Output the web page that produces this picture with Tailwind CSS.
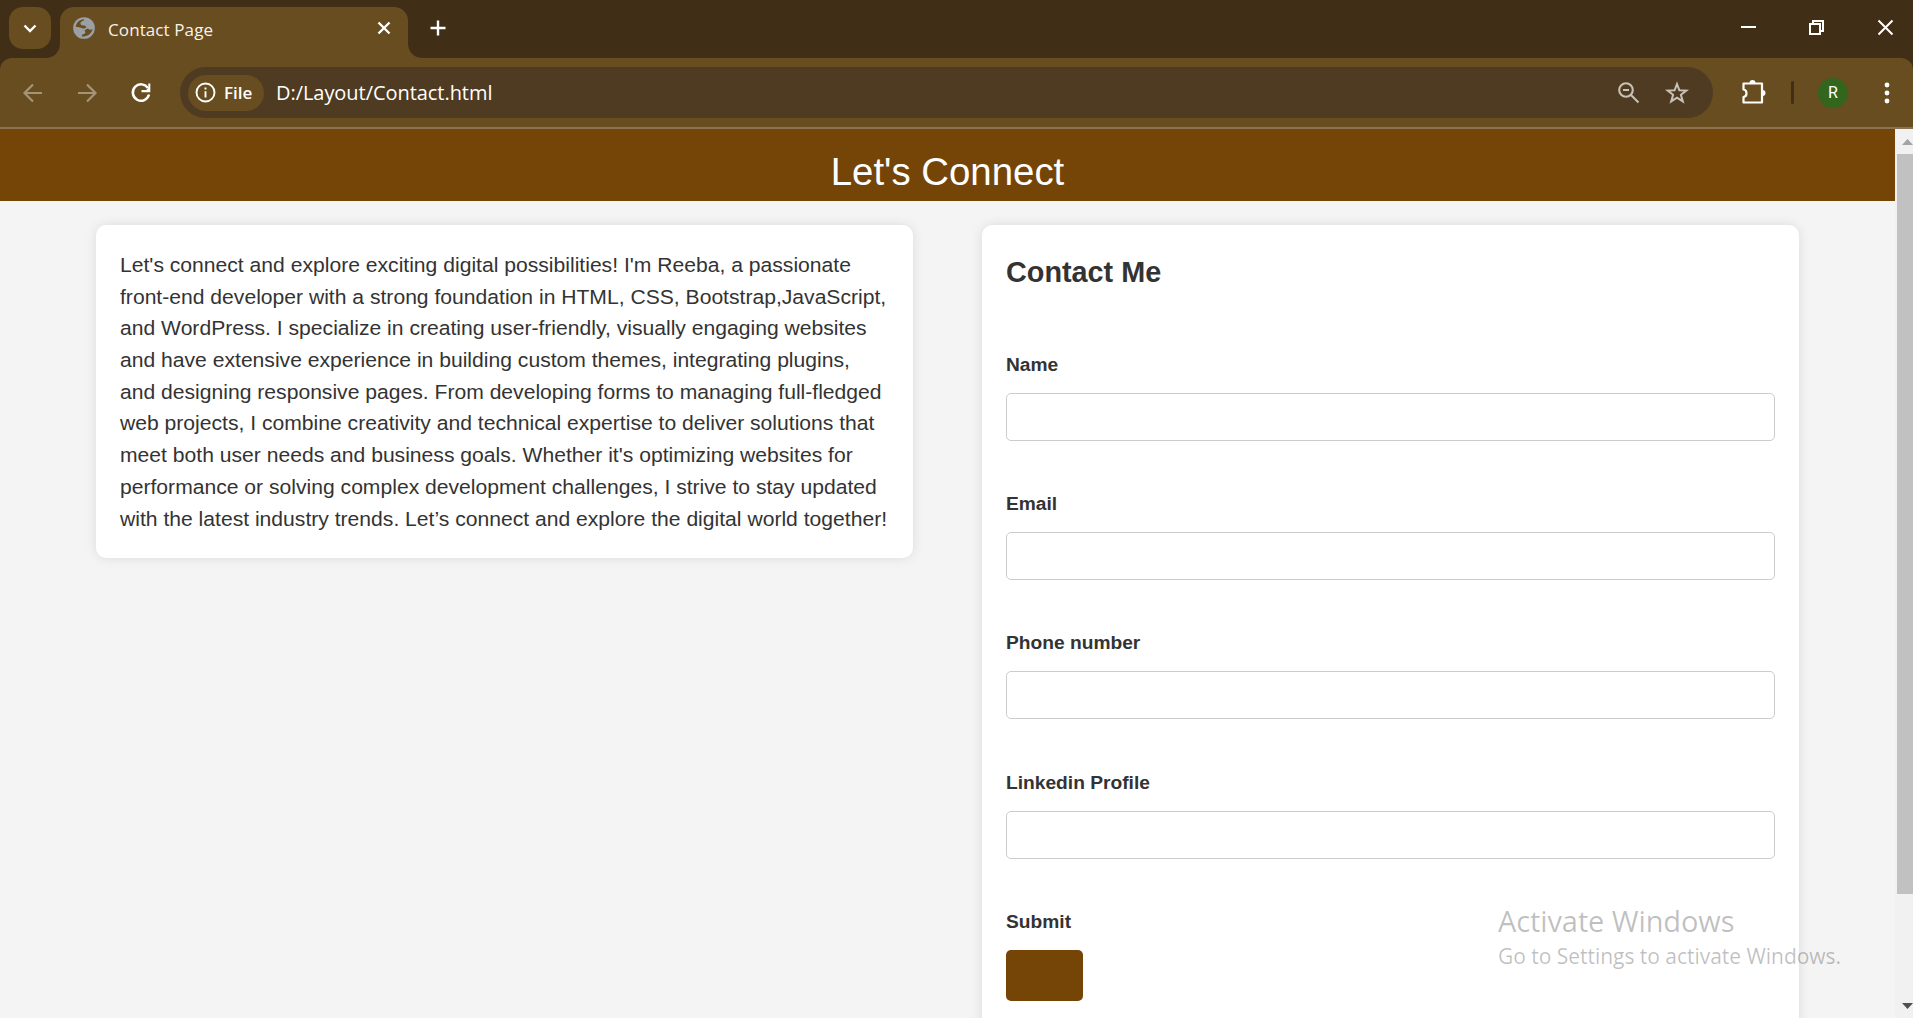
<!DOCTYPE html>
<html lang="en">
<head>
<meta charset="utf-8">
<title>Contact Page</title>
<script src="https://cdn.jsdelivr.net/npm/@tailwindcss/browser@4"></script>
</head>
<body class="w-[1913px] h-[1018px] overflow-hidden bg-[#f3f3f3] font-['Open_Sans','Noto_Sans',sans-serif]">
<div class="relative flex h-[1018px] w-[1913px] flex-col overflow-hidden">
  <!-- Tab strip -->
  <div class="flex h-[58px] shrink-0 bg-[#412e17] pl-[9px]">
    <div class="mt-[7px] flex size-[42px] items-center justify-center rounded-[14px] bg-[#684d20]">
      <svg class="size-[42px]" viewBox="0 0 42 42" fill="none" stroke="#fff" stroke-width="2.4"><path d="M15.500 18.500 21 24l5.500-5.500"/></svg>
    </div>
    <svg class="-ml-[6px] mt-[43px] h-[15px] w-[15px] shrink-0" viewBox="0 0 15 15"><path d="M15 0v15H0C9 15 15 9 15 0z" fill="#684d20"/></svg>
    <div class="mt-[7px] flex h-[51px] w-[348px] shrink-0 rounded-t-[14px] bg-[#684d20]">
      <svg class="ml-[11px] mt-[8px] size-[26px] shrink-0" viewBox="0 0 24 24"><circle cx="12" cy="12" r="10" fill="#9aa0a6"/><path d="M4.300 10.800C5 7 8 4.200 12 4v1C10 5.500 8.500 6.500 8.700 8c.300 1.800 2.300 1.500 3.800 1.800l2 1.200-2.500 1.600C10 12 7 11 4.300 10.800zM20 13c-.700 4-5 7.500-10 6.800l.300-1.800c1.700-.200 3-.800 3-2l-.800-2 3-1.500c1.500 1.300 3.500 1.500 4.500.500z" fill="#684d20"/></svg>
      <span class="ml-[11px] mt-[9px] w-[120px] shrink-0 whitespace-nowrap text-[17px] leading-[27px] tracking-[0.1px] text-[#f8f2e8]">Contact Page</span>
      <svg class="ml-[144px] mt-[9px] size-[24px] shrink-0" viewBox="0 0 24 24" fill="none" stroke="#fff" stroke-width="2.400"><path d="M6.500 6.500l11 11M17.500 6.500l-11 11"/></svg>
    </div>
    <svg class="mt-[43px] size-[15px] shrink-0" viewBox="0 0 15 15"><path d="M0 0v15h15C6 15 0 9 0 0z" fill="#684d20"/></svg>
    <svg class="ml-[3px] mt-[16px] size-[24px]" viewBox="0 0 24 24" fill="none" stroke="#fff" stroke-width="2.400"><path d="M12 4.500v15M4.500 12h15"/></svg>
    <div class="ml-auto flex pr-[19px] pt-[19px]">
      <svg class="h-[17px] w-[17px]" viewBox="0 0 17 17"><path d="M1 7h15v2H1z" fill="#fff"/></svg>
      <svg class="ml-[51px] size-[17px]" viewBox="0 0 17 17" fill="none" stroke="#fff" stroke-width="2"><path d="M2 5h10v10H2zM5 5V2h10v10h-3"/></svg>
      <svg class="ml-[52px] size-[17px]" viewBox="0 0 17 17" fill="none" stroke="#fff" stroke-width="2"><path d="M1.500 1.500l14 14M15.500 1.500l-14 14"/></svg>
    </div>
  </div>
  <!-- Toolbar -->
  <div class="h-[69px] shrink-0 bg-[#412e17]">
  <div class="flex h-[69px] items-center rounded-t-[12px] bg-[#684d20]">
    <svg class="ml-[21px] size-[24px]" viewBox="0 0 24 24" fill="none" stroke="#a59478" stroke-width="2.200"><path d="M21 12H4M12 3.500 3.500 12l8.500 8.500"/></svg>
    <svg class="ml-[30px] size-[24px]" viewBox="0 0 24 24" fill="none" stroke="#a59478" stroke-width="2.200"><path d="M3 12h17M12 3.500l8.500 8.500-8.500 8.500"/></svg>
    <svg class="ml-[29px] size-[26px]" viewBox="0 0 26 26" fill="none"><path d="M20 8.200A8.200 8.200 0 1 0 21 14.500" stroke="#fff" stroke-width="2.500"/><path d="M22.300 3.500v8.800h-8.800v-2.300h4.800l2-2V3.500z" fill="#fff"/></svg>
    <div class="ml-[26px] flex h-[51px] w-[1533px] items-center rounded-full bg-[#4e3b21] pl-[8px]">
      <div class="flex h-[36px] w-[76px] items-center rounded-full bg-[#684d20] pl-[7px]">
        <svg class="size-[21px]" viewBox="0 0 21 21" fill="none" stroke="#fff" stroke-width="1.900"><circle cx="10.500" cy="10.500" r="9"/><path d="M10.500 9.300v6.200M10.500 5.500v2"/></svg>
        <span class="ml-[8px] text-[17px] font-semibold text-white">File</span>
      </div>
      <span class="ml-[12px] whitespace-nowrap text-[20px] tracking-[-0.050px] text-white">D:/Layout/Contact.html</span>
      <svg class="ml-auto size-[24px]" viewBox="0 0 24 24" fill="none" stroke="#c8c1b7" stroke-width="2.100"><circle cx="10" cy="9" r="6.800"/><path d="M15 14l7.500 7.500M7 9h6"/></svg>
      <svg class="ml-[24px] mr-[23px] size-[26px]" viewBox="0 0 26 26" fill="none" stroke="#c8c1b7" stroke-width="2"><path d="M13 4l2.400 6.300 6.900.300-5.400 4.200 1.900 6.600L13 17.600l-5.800 3.800 1.900-6.600-5.400-4.200 6.900-.300z"/></svg>
    </div>
    <svg class="-mt-[3px] ml-[26px] mr-[1px] size-[28px]" viewBox="0 0 28 28"><path d="M4.500 6.500h18.500v19H4.500v-5.500c4-.500 4-7 0-7.500z" fill="none" stroke="#fff" stroke-width="2.200" stroke-linejoin="round"/><path d="M10.500 6a3 3 0 0 1 6 0zM23.500 13a3 3 0 0 1 0 6z" fill="#fff"/></svg>
    <div class="ml-[23px] h-[23px] w-[3px] rounded bg-[#412e17]"></div>
    <div class="ml-[24px] flex size-[30px] items-center justify-center rounded-full bg-[#31661c] font-[Roboto,sans-serif] text-[16px] text-white">R</div>
    <svg class="ml-[27px] size-[24px]" viewBox="0 0 24 24" fill="#fff"><circle cx="12" cy="4" r="2.400"/><circle cx="12" cy="12" r="2.400"/><circle cx="12" cy="20" r="2.400"/></svg>
  </div>
  </div>
  <div class="h-[2px] shrink-0 bg-[#8a7350]"></div>
  <!-- Viewport -->
  <div class="flex min-h-0 flex-1 bg-[#f4f4f4] font-['Liberation_Sans',Arial,sans-serif] text-[#333]">
    <div class="min-w-0 flex-1 overflow-hidden">
      <h1 class="h-[72px] bg-[#754507] pt-[21px] text-center text-[38.400px] leading-[44px] text-white">Let's Connect</h1>
      <main class="flex items-start gap-[69px] px-[96px] pt-[24px]">
        <p class="h-[333px] w-[817px] shrink-0 whitespace-nowrap rounded-[10px] bg-white px-[24px] pt-[24px] text-[21.120px] leading-[31.680px] shadow-[0_0_12px_rgba(0,0,0,0.1)]">
          Let's connect and explore exciting digital possibilities! I'm Reeba, a passionate<br>
          front-end developer with a strong foundation in HTML, CSS, Bootstrap,JavaScript,<br>
          and WordPress. I specialize in creating user-friendly, visually engaging websites<br>
          and have extensive experience in building custom themes, integrating plugins,<br>
          and designing responsive pages. From developing forms to managing full-fledged<br>
          web projects, I combine creativity and technical expertise to deliver solutions that<br>
          meet both user needs and business goals. Whether it's optimizing websites for<br>
          performance or solving complex development challenges, I strive to stay updated<br>
          with the latest industry trends. Let’s connect and explore the digital world together!
        </p>
        <form class="h-[900px] w-[817px] shrink-0 rounded-[10px] bg-white px-[24px] pt-[24px] text-[19.200px] font-bold shadow-[0_0_12px_rgba(0,0,0,0.1)]">
          <h2 class="h-[104px] text-[28.800px] leading-[46px]">Contact Me</h2>
          <label class="block h-[139.200px]"><span class="block h-[40px] leading-[23px]">Name</span><input class="block h-[48px] w-full rounded-[5px] border border-[#ccc]"></label>
          <label class="block h-[139.200px]"><span class="block h-[40px] leading-[23px]">Email</span><input class="block h-[48px] w-full rounded-[5px] border border-[#ccc]"></label>
          <label class="block h-[139.200px]"><span class="block h-[40px] leading-[24px]">Phone number</span><input class="block h-[48px] w-full rounded-[5px] border border-[#ccc]"></label>
          <label class="block h-[139.200px]"><span class="block h-[40px] leading-[23px]">Linkedin Profile</span><input class="block h-[48px] w-full rounded-[5px] border border-[#ccc]"></label>
          <span class="block h-[40px] leading-[24px]">Submit</span>
          <button type="button" class="block h-[51px] w-[77px] rounded-[5px] bg-[#754507]"></button>
        </form>
      </main>
    </div>
    <!-- Scrollbar -->
    <div class="flex w-[18px] shrink-0 flex-col overflow-hidden bg-[#f1f1f1] pl-[2px]">
      <svg class="ml-[5px] mt-[10px] h-[6px] w-[11px] shrink-0" viewBox="0 0 11 6"><path d="M0 6 5.500 0 11 6z" fill="#a3a3a3"/></svg>
      <div class="mt-[9px] h-[740px] w-[16px] bg-[#c1c1c1]"></div>
      <svg class="mb-[9px] ml-[5px] mt-auto h-[6px] w-[11px] shrink-0" viewBox="0 0 11 6"><path d="M0 0h11L5.500 6z" fill="#505050"/></svg>
    </div>
  </div>
  <!-- Desktop watermark -->
  <div class="absolute left-[1498px] top-[899px] whitespace-nowrap text-black/25">
    <div class="text-[29px] leading-[44px] tracking-[-0.100px]">Activate Windows</div>
    <div class="text-[21px] leading-[26px] tracking-[-0.030px]">Go to Settings to activate Windows.</div>
  </div>
</div>
</body>
</html>
